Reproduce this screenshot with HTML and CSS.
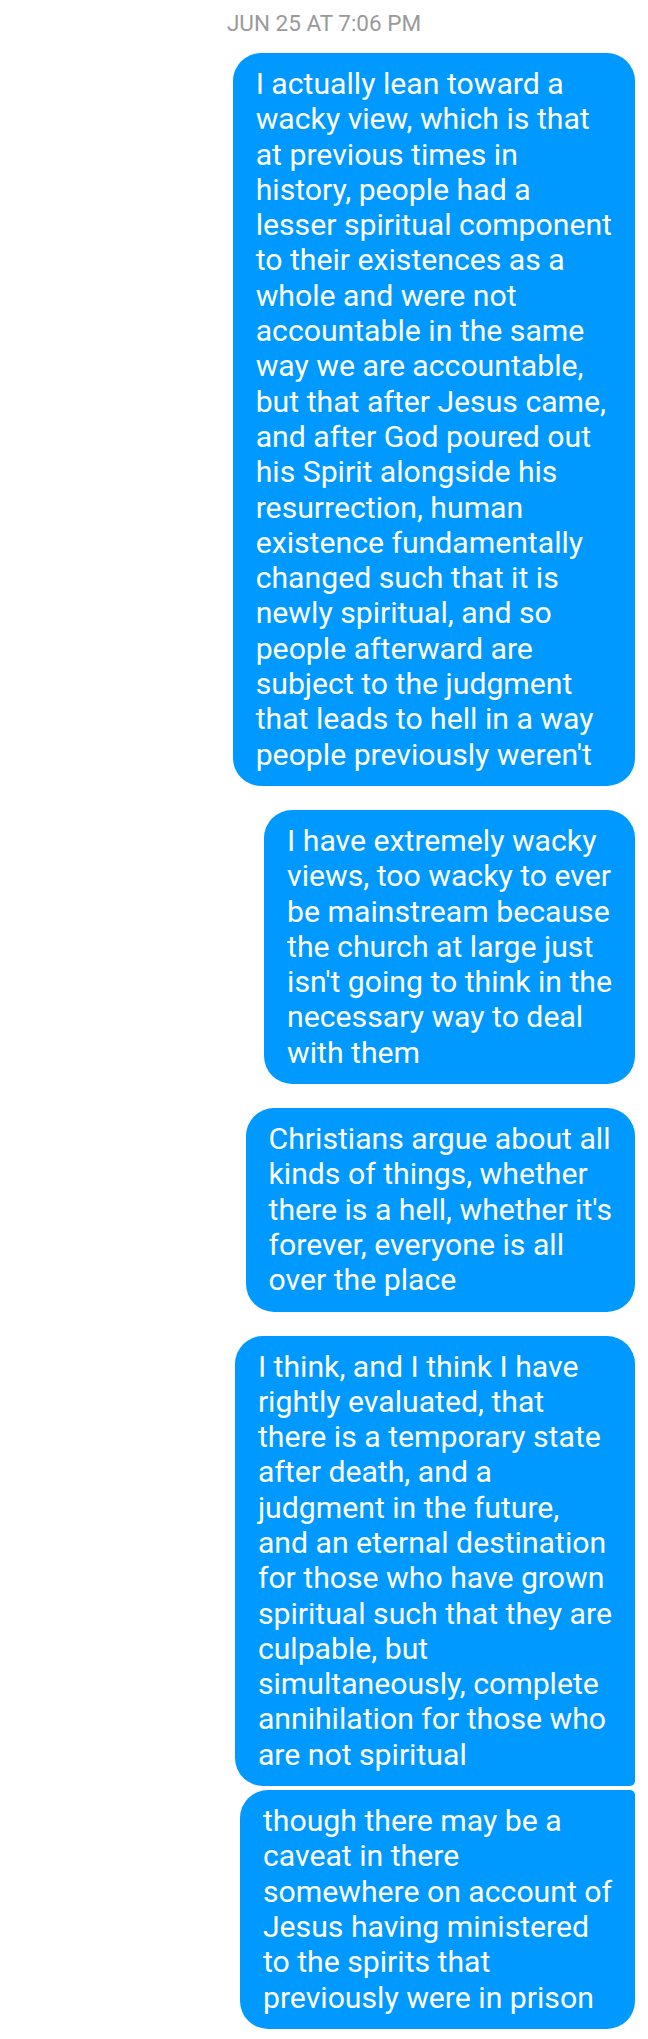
FILE: index.html
```html
<!DOCTYPE html>
<html>
<head>
<meta charset="utf-8">
<link rel="stylesheet" href="styles.css">
</head>
<body>
<div class="thread">
  <div class="stamp">JUN 25 AT 7:06 PM</div>
  <div class="msg">I actually lean toward a<br>wacky view, which is that<br>at previous times in<br>history, people had a<br>lesser spiritual component<br>to their existences as a<br>whole and were not<br>accountable in the same<br>way we are accountable,<br>but that after Jesus came,<br>and after God poured out<br>his Spirit alongside his<br>resurrection, human<br>existence fundamentally<br>changed such that it is<br>newly spiritual, and so<br>people afterward are<br>subject to the judgment<br>that leads to hell in a way<br>people previously weren't</div>
  <div class="msg">I have extremely wacky<br>views, too wacky to ever<br>be mainstream because<br>the church at large just<br>isn't going to think in the<br>necessary way to deal<br>with them</div>
  <div class="msg">Christians argue about all<br>kinds of things, whether<br>there is a hell, whether it's<br>forever, everyone is all<br>over the place</div>
  <div class="group">
    <div class="msg first">I think, and I think I have<br>rightly evaluated, that<br>there is a temporary state<br>after death, and a<br>judgment in the future,<br>and an eternal destination<br>for those who have grown<br>spiritual such that they are<br>culpable, but<br>simultaneously, complete<br>annihilation for those who<br>are not spiritual</div>
    <div class="msg last">though there may be a<br>caveat in there<br>somewhere on account of<br>Jesus having ministered<br>to the spirits that<br>previously were in prison</div>
  </div>
</div>
</body>
</html>
```
FILE: styles.css
```css
html, body {
  margin: 0;
  padding: 0;
  background: #ffffff;
}
.thread {
  display: flex;
  flex-direction: column;
  align-items: flex-end;
  gap: 24px;
  padding: 0 13px 10px 0;
  font-family: Roboto, "Noto Sans", sans-serif;
}
.stamp {
  align-self: stretch;
  padding-left: 13px;
  text-align: center;
  color: #9a9a9a;
  font-size: 22.5px;
  line-height: 26px;
  padding-top: 10px;
  margin-bottom: -7px;
}
.group {
  display: flex;
  flex-direction: column;
  align-items: flex-end;
  gap: 4px;
}
.msg {
  background: #0099ff;
  color: #ffffff;
  font-size: 30.2px;
  line-height: 35.3px;
  padding: 13px 23px 14px 23px;
  border-radius: 28px;
  white-space: nowrap;
}
.msg.first {
  border-bottom-right-radius: 5px;
}
.msg.last {
  border-top-right-radius: 5px;
}
```
